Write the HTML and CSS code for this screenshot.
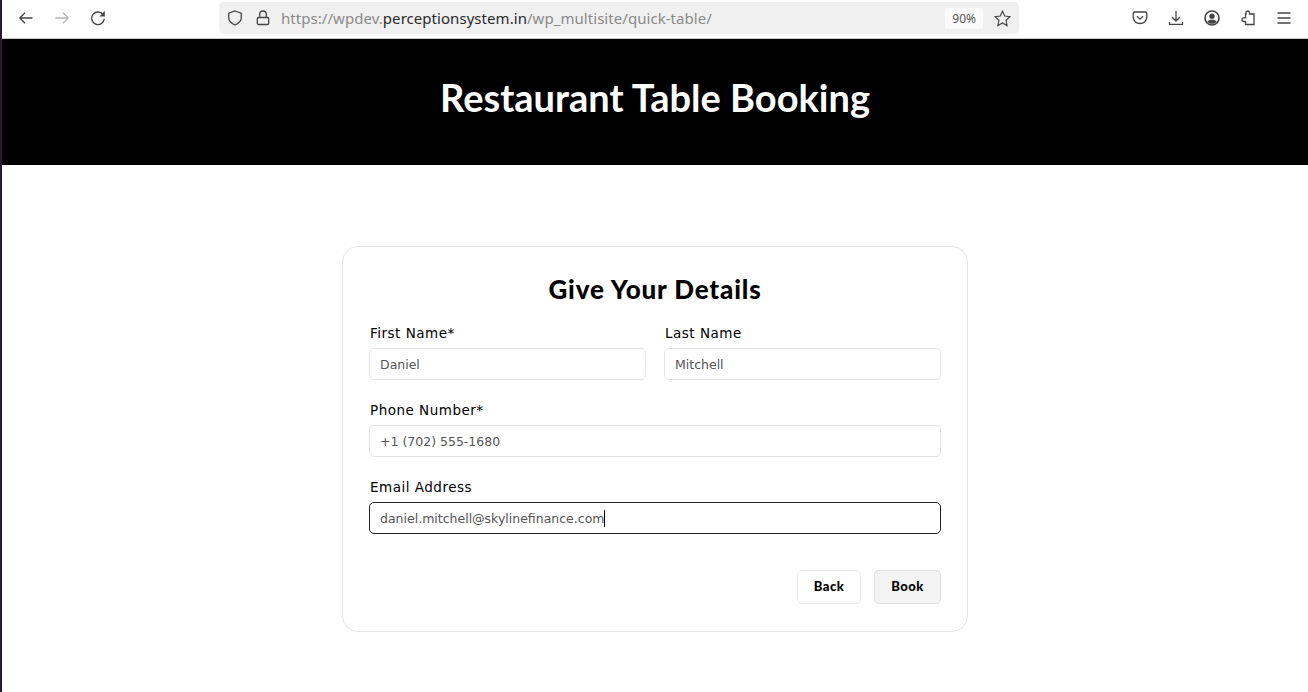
FILE: index.html
```html
<!DOCTYPE html>
<html lang="en">
<head>
    <meta charset="UTF-8">
    <title>Restaurant Table Booking</title>
    <link rel="stylesheet" href="styles.css">
</head>
<body>
    <div class="window">
        <div class="toolbar">
            <div class="nav-buttons">
                <svg class="icon" viewBox="0 0 16 16"><path d="M14.500 8H1.800M7 2.800L1.800 8 7 13.200"/></svg>
                <svg class="icon icon-off" viewBox="0 0 16 16"><path d="M1.500 8h12.700M9 2.800L14.200 8 9 13.200"/></svg>
                <svg class="icon" viewBox="0 0 16 16"><path d="M13.400 5A6.300 6.300 0 1 0 14.300 8.800"/><path class="solid" d="M14.800 1v5.400H9.400z"/></svg>
            </div>
            <div class="urlbar">
                <svg class="icon url-icon" viewBox="0 0 16 16"><path d="M8 1l6.300 2.100v4.500c0 3.400-2.500 5.800-6.300 7.400-3.800-1.600-6.300-4-6.300-7.400V3.100z"/></svg>
                <svg class="icon url-icon" viewBox="0 0 16 16"><path d="M4.700 7.500V4.300a3.300 3.300 0 0 1 6.600 0v3.200"/><rect x="2.300" y="7.500" width="11.400" height="7" rx="1.300"/></svg>
                <div class="url-text">https://wpdev.<b>perceptionsystem.in</b>/wp_multisite/quick-table/</div>
                <div class="zoom-badge">90%</div>
                <svg class="icon star" viewBox="0 0 16 16"><path d="M8 1.200l2.100 4.500 4.900.6-3.600 3.400.9 4.900L8 12.200l-4.300 2.400.9-4.900L1 6.300l4.900-.6z"/></svg>
            </div>
            <div class="tool-buttons">
                <svg class="icon" viewBox="0 0 16 16"><path d="M2.500 2h11c.8 0 1.300.5 1.300 1.300V7c0 3.800-3 6.500-6.800 6.500S1.200 10.800 1.200 7V3.300C1.200 2.500 1.700 2 2.500 2z"/><path d="M5 6.200l3 3 3-3"/></svg>
                <svg class="icon" viewBox="0 0 16 16"><path d="M8 1v10M4 7l4 4 4-4M1.500 12v2.300h13V12"/></svg>
                <svg class="icon icon-heavy" viewBox="0 0 16 16"><circle cx="8" cy="8" r="7"/><circle class="solid" cx="8" cy="6.300" r="2.700"/><path class="solid" d="M3.400 11.500c.8-1.300 2.200-1.800 4.600-1.800s3.800.5 4.600 1.800C11.500 13 10 13.800 8 13.800s-3.500-.8-4.600-2.300z"/></svg>
                <svg class="icon" viewBox="0 0 16 16"><path d="M6 2.800C6 1.700 6.800 1 7.800 1s1.700.7 1.700 1.800V4H14v10.500H5.500v-3H4c-1.200 0-2-.8-2-1.800s.8-1.800 2-1.800h1.500V4H6z"/></svg>
                <svg class="icon" viewBox="0 0 16 16"><path d="M1.500 3h13M1.500 8h13M1.500 13h13"/></svg>
            </div>
        </div>

        <header class="page-header">
            <h1>Restaurant Table Booking</h1>
        </header>

        <main class="page-main">
            <form class="details-card">
                <h2>Give Your Details</h2>
                <div class="name-row">
                    <div class="field">
                        <div class="field-label">First Name*</div>
                        <div class="input">Daniel</div>
                    </div>
                    <div class="field">
                        <div class="field-label">Last Name</div>
                        <div class="input">Mitchell</div>
                    </div>
                </div>
                <div class="field">
                    <div class="field-label">Phone Number*</div>
                    <div class="input">+1 (702) 555-1680</div>
                </div>
                <div class="field">
                    <div class="field-label">Email Address</div>
                    <div class="input input-focus"><span class="caret-text">daniel.mitchell@skylinefinance.com</span></div>
                </div>
                <div class="actions">
                    <button type="button" class="btn">Back</button>
                    <button type="button" class="btn btn-hover">Book</button>
                </div>
            </form>
        </main>
    </div>
</body>
</html>
```

FILE: styles.css
```css
html, body {
    height: 100%;
    margin: 0;
    padding: 0;
}
body {
    background-color: #2c1a2e;
    padding-left: 2px;
    overflow: hidden;
    box-sizing: border-box;
}
.window {
    background-color: #fff;
    height: 100%;
    display: flex;
    flex-direction: column;
}
.toolbar {
    height: 38px;
    flex: none;
    display: flex;
    align-items: flex-start;
    background-color: #fff;
    border-bottom: 1px solid #ccc;
}
.icon {
    width: 16px;
    height: 16px;
    flex: none;
    fill: none;
    stroke: #444;
    stroke-width: 1.3;
}
.icon .solid {
    fill: #444;
    stroke: none;
}
.icon-off {
    stroke: #b5b5b5;
}
.icon-heavy {
    stroke-width: 1.6;
}
.nav-buttons {
    width: 217px;
    padding: 10px 0 0 16px;
    display: flex;
    gap: 20px;
    box-sizing: border-box;
}
.urlbar {
    width: 800px;
    height: 32px;
    margin-top: 2px;
    background-color: #f0f0f0;
    border-radius: 5px;
    display: flex;
    align-items: center;
    padding: 0 8px;
    box-sizing: border-box;
    gap: 12px;
}
.url-text {
    flex: 1;
    margin-left: -2px;
    font-family: "Noto Sans", sans-serif;
    font-size: 15px;
    letter-spacing: 0.05px;
    color: #8a8a8a;
    white-space: nowrap;
}
.url-text b {
    font-weight: 400;
    color: #2a2a2a;
}
.zoom-badge {
    background-color: #fafafa;
    border-radius: 3px;
    padding: 2px 7px;
    font-family: "Noto Sans", sans-serif;
    font-size: 12px;
    color: #555;
}
.star {
    margin-left: -1px;
    width: 17px;
    height: 17px;
    stroke-width: 1.1;
}
.tool-buttons {
    flex: 1;
    display: flex;
    gap: 20px;
    padding: 10px 0 0 113px;
    box-sizing: border-box;
}
.page-header {
    height: 126px;
    flex: none;
    background-color: #000;
    display: flex;
    justify-content: center;
    padding-top: 35px;
    box-sizing: border-box;
}
.page-header h1 {
    margin: 0;
    color: #fff;
    font-family: "Lato", sans-serif;
    font-size: 38px;
    line-height: 46px;
    font-weight: 700;
}
.page-main {
    flex: 1;
    display: flex;
    justify-content: center;
    align-items: flex-start;
    padding-top: 81px;
}
.details-card {
    width: 626px;
    height: 386px;
    box-sizing: border-box;
    border: 1px solid #e6e6e6;
    border-radius: 16px;
    padding: 26px 26px 0;
    display: flex;
    flex-direction: column;
}
.details-card h2 {
    margin: 0 0 20px;
    text-align: center;
    font-family: "Lato", sans-serif;
    font-size: 26px;
    line-height: 32px;
    font-weight: 900;
    letter-spacing: 0.85px;
    color: #000;
}
.name-row {
    display: flex;
    gap: 18px;
}
.name-row .field {
    flex: 1;
}
.field {
    margin-bottom: 22px;
}
.field-label {
    padding-left: 1px;
    font-family: "DejaVu Sans", sans-serif;
    font-size: 13.5px;
    line-height: 17px;
    letter-spacing: 0.5px;
    color: #000;
    margin-bottom: 6px;
}
.input {
    height: 32px;
    box-sizing: border-box;
    border: 1px solid #e3e3e3;
    border-radius: 5px;
    padding: 0 10px;
    display: flex;
    align-items: center;
    font-family: "DejaVu Sans", sans-serif;
    font-size: 12.5px;
    color: #555;
}
.input-focus {
    border-color: #222;
}
.caret-text {
    border-right: 1px solid #000;
    line-height: 17px;
}
.actions {
    display: flex;
    justify-content: flex-end;
    gap: 13px;
    margin-top: 14px;
}
.btn {
    height: 34px;
    width: 64px;
    background-color: #fff;
    border: 1px solid #e8e8e8;
    border-radius: 5px;
    padding: 0 0 2px;
    font-family: "Lato", sans-serif;
    font-size: 13px;
    font-weight: 900;
    letter-spacing: 0.5px;
    color: #000;
    cursor: pointer;
}
.btn-hover {
    width: 67px;
    background-color: #f4f4f4;
    border-color: #ddd;
}
```
